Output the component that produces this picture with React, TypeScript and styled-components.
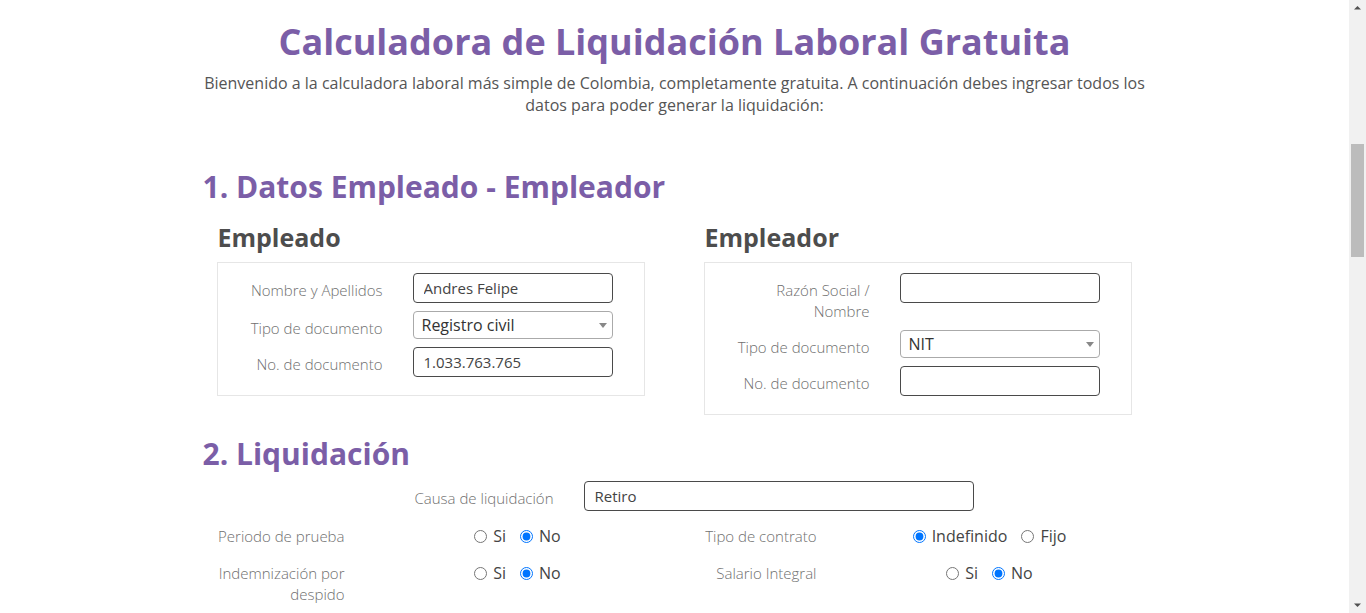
import React from 'react';
import styled, { createGlobalStyle } from 'styled-components';

const GlobalStyle = createGlobalStyle`
  html, body {
    margin: 0;
    padding: 0;
    background: #fff;
  }
  body {
    font-family: 'Open Sans', 'Liberation Sans', sans-serif;
    color: #555;
  }
`;

type Option = { label: string; checked?: boolean };

const RadioRow = ({ name, options }: { name: string; options: Option[] }) => (
  <Radios>
    {options.map((o) => (
      <RadioLabel key={o.label}>
        <RadioInput type="radio" name={name} defaultChecked={o.checked} />
        {o.label}
      </RadioLabel>
    ))}
  </Radios>
);

const App = () => {
  return (
    <Page>
      <GlobalStyle />
      <Main>
        <Container>
          <Title>Calculadora de Liquidación Laboral Gratuita</Title>
          <Intro>
            Bienvenido a la calculadora laboral más simple de Colombia, completamente gratuita. A
            continuación debes ingresar todos los datos para poder generar la liquidación:
          </Intro>

          <SectionTitle $top={53}>1. Datos Empleado - Empleador</SectionTitle>
          <Parties>
            <div>
              <PartyTitle>Empleado</PartyTitle>
              <FormBox>
                <FieldLabel>Nombre y Apellidos</FieldLabel>
                <TextInput defaultValue="Andres Felipe" />
                <FieldLabel>Tipo de documento</FieldLabel>
                <SelectWrap>
                  <Select defaultValue="rc">
                    <option value="rc">Registro civil</option>
                    <option value="cc">Cédula de ciudadanía</option>
                  </Select>
                  <Caret />
                </SelectWrap>
                <FieldLabel>No. de documento</FieldLabel>
                <TextInput defaultValue="1.033.763.765" />
              </FormBox>
            </div>
            <div>
              <PartyTitle>Empleador</PartyTitle>
              <FormBox>
                <FieldLabel>Razón Social / Nombre</FieldLabel>
                <TextInput defaultValue="" />
                <FieldLabel>Tipo de documento</FieldLabel>
                <SelectWrap>
                  <Select defaultValue="nit">
                    <option value="nit">NIT</option>
                    <option value="cc">Cédula de ciudadanía</option>
                  </Select>
                  <Caret />
                </SelectWrap>
                <FieldLabel>No. de documento</FieldLabel>
                <TextInput defaultValue="" />
              </FormBox>
            </div>
          </Parties>

          <SectionTitle $top={21}>2. Liquidación</SectionTitle>
          <CauseRow>
            <FieldLabel>Causa de liquidación</FieldLabel>
            <TextInput defaultValue="Retiro" />
          </CauseRow>

          <OptionsGrid>
            <OptionItem>
              <FieldLabel>Periodo de prueba</FieldLabel>
              <RadioRow name="prueba" options={[{ label: 'Si' }, { label: 'No', checked: true }]} />
            </OptionItem>
            <OptionItem>
              <FieldLabel>Tipo de contrato</FieldLabel>
              <RadioRow
                name="contrato"
                options={[{ label: 'Indefinido', checked: true }, { label: 'Fijo' }]}
              />
            </OptionItem>
            <OptionItem>
              <FieldLabel>Indemnización por despido</FieldLabel>
              <RadioRow name="indem" options={[{ label: 'Si' }, { label: 'No', checked: true }]} />
            </OptionItem>
            <OptionItem>
              <FieldLabel>Salario Integral</FieldLabel>
              <RadioRow name="integral" options={[{ label: 'Si' }, { label: 'No', checked: true }]} />
            </OptionItem>
          </OptionsGrid>
        </Container>
      </Main>

      <Scrollbar>
        <svg width="17" height="17" viewBox="0 0 17 17">
          <path d="M5 9.5 L8.5 6 L12 9.5 Z" fill="#505050" />
        </svg>
        <Track>
          <Thumb />
        </Track>
        <svg width="17" height="17" viewBox="0 0 17 17">
          <path d="M5 7.5 L8.5 11 L12 7.5 Z" fill="#505050" />
        </svg>
      </Scrollbar>
    </Page>
  );
};

export default App;

const Page = styled.div`
  display: flex;
  height: 613px;
  overflow: hidden;
`;

const Main = styled.main`
  flex: 1;
  min-width: 0;
  padding-top: 21px;
`;

const Container = styled.div`
  width: 940px;
  margin: 0 auto;
`;

const Title = styled.h1`
  margin: 0;
  text-align: center;
  font-size: 36px;
  line-height: 42px;
  font-weight: 700;
  color: #7b5ea7;
`;

const Intro = styled.p`
  margin: 9px -12px 0;
  text-align: center;
  font-size: 16px;
  line-height: 22px;
  color: #555;
`;

const SectionTitle = styled.h2<{ $top: number }>`
  margin: ${(p) => p.$top}px 0 0 -2px;
  font-size: 30px;
  line-height: 36px;
  font-weight: 700;
  color: #7b5ea7;
`;

const Parties = styled.div`
  display: grid;
  grid-template-columns: 428px 428px;
  column-gap: 59px;
  align-items: start;
  padding-left: 12px;
  margin-top: 17px;
`;

const PartyTitle = styled.h3`
  margin: 0 0 10px 1px;
  font-size: 25px;
  line-height: 30px;
  font-weight: 700;
  color: #4d4d4d;
`;

const FormBox = styled.div`
  border: 1px solid #e6e6e6;
  padding: 10px 0 18px 30px;
  display: grid;
  grid-template-columns: 135px 200px;
  column-gap: 30px;
  row-gap: 8px;
`;

const FieldLabel = styled.label`
  text-align: right;
  padding-top: 7px;
  font-size: 15px;
  line-height: 21px;
  font-weight: 300;
  color: #6f6f6f;
`;

const TextInput = styled.input`
  box-sizing: border-box;
  width: 100%;
  height: 30px;
  border: 1px solid #4a4a4a;
  border-radius: 4px;
  padding: 0 10px;
  font-family: 'Open Sans', 'Liberation Sans', sans-serif;
  font-size: 15px;
  color: #444;
  background: #fff;
  outline: none;
`;

const SelectWrap = styled.div`
  position: relative;
  height: 28px;
`;

const Select = styled.select`
  appearance: none;
  box-sizing: border-box;
  width: 100%;
  height: 28px;
  border: 1px solid #aaa;
  border-radius: 4px;
  padding: 0 20px 0 8px;
  font-family: 'Open Sans', 'Liberation Sans', sans-serif;
  font-size: 16px;
  color: #333;
  background: #fff;
  outline: none;
`;

const Caret = styled.span`
  position: absolute;
  right: 6px;
  top: 12px;
  width: 0;
  height: 0;
  border-left: 4px solid transparent;
  border-right: 4px solid transparent;
  border-top: 5px solid #888;
`;

const CauseRow = styled.div`
  display: grid;
  grid-template-columns: 349px 390px;
  column-gap: 30px;
  margin-top: 9px;
  align-items: start;
`;

const OptionsGrid = styled.div`
  display: grid;
  grid-template-columns: 444px 444px;
  column-gap: 28px;
  row-gap: 16px;
  padding-left: 12px;
  margin-top: 15px;
`;

const OptionItem = styled.div`
  display: grid;
  grid-template-columns: 128px 1fr;
  column-gap: 30px;
  align-items: start;

  & > label {
    padding-top: 0;
  }
`;

const Radios = styled.div`
  display: flex;
  justify-content: center;
  gap: 14px;
  font-size: 16px;
  line-height: 21px;
`;

const RadioLabel = styled.label`
  display: flex;
  align-items: center;
  gap: 6px;
  color: #444;
  font-size: 16px;
`;

const RadioInput = styled.input`
  margin: 0;
  width: 13px;
  height: 13px;
`;

const Scrollbar = styled.div`
  width: 17px;
  flex: none;
  display: flex;
  flex-direction: column;
  background: #f1f1f1;
`;

const Track = styled.div`
  flex: 1;
  padding-top: 127px;
`;

const Thumb = styled.div`
  width: 13px;
  height: 113px;
  margin-left: 2px;
  background: #bcbcbc;
`;
